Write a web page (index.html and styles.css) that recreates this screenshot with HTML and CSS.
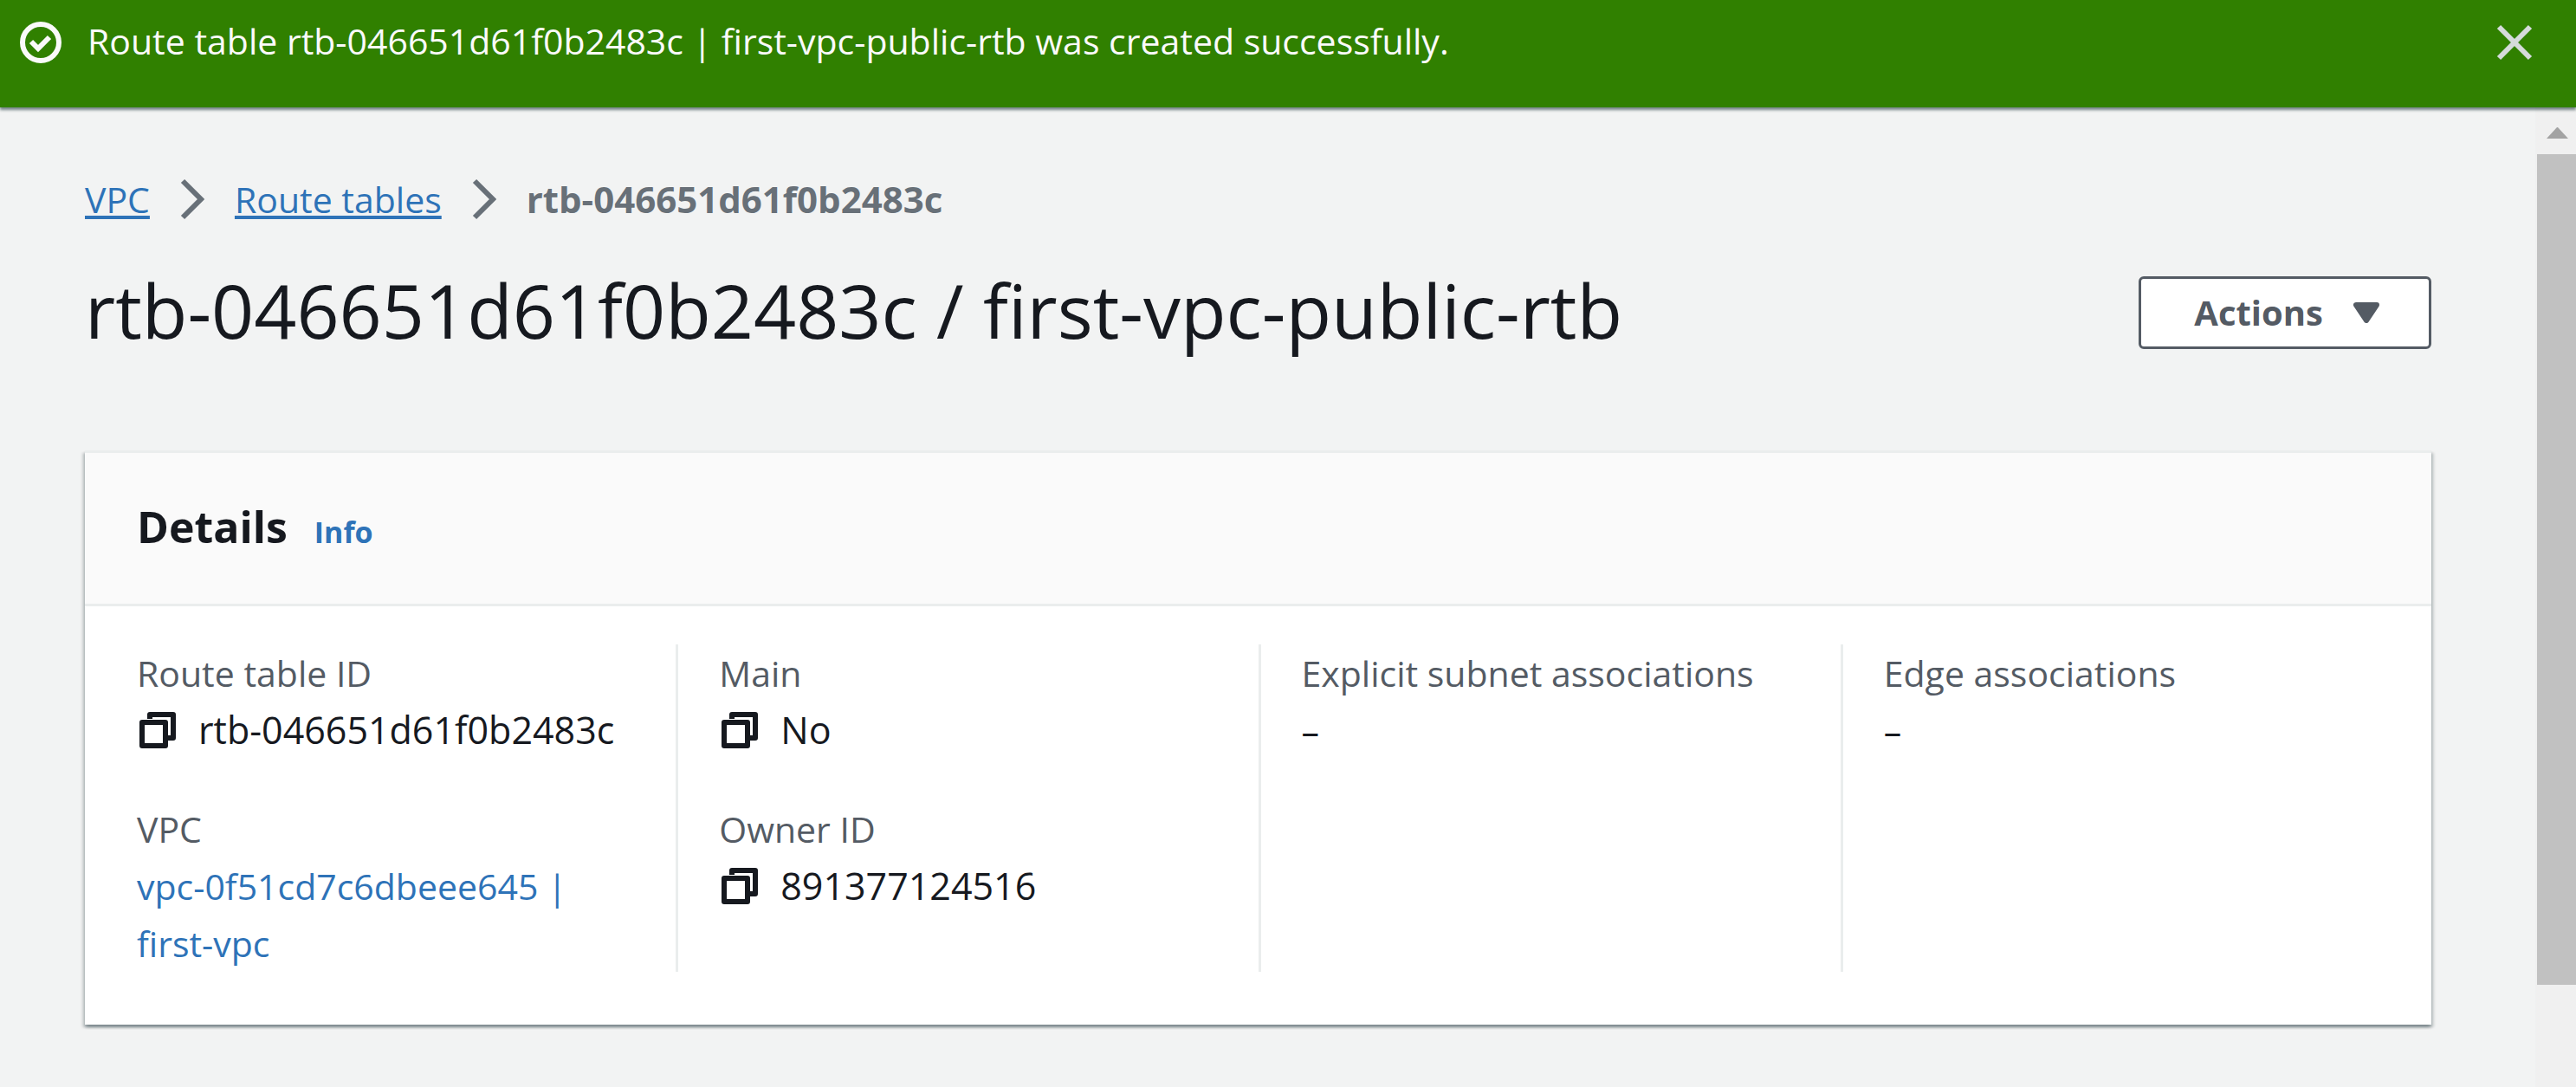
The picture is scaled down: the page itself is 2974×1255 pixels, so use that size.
FILE: index.html
```html
<!DOCTYPE html>
<html lang="en">
<head>
<meta charset="utf-8">
<title>Route table details | VPC</title>
<link rel="stylesheet" href="styles.css">
</head>
<body>
<svg class="sprite" aria-hidden="true">
  <symbol id="copy" viewBox="0 0 48 48">
    <path d="M15 11V6H42V33H36" />
    <rect x="6" y="15" width="27" height="27" />
  </symbol>
  <symbol id="chevron" viewBox="0 0 28 48">
    <path d="M3 3L24 24L3 45" />
  </symbol>
</svg>

<div class="flash" role="status">
  <svg class="flash-icon" viewBox="0 0 54 54" aria-hidden="true">
    <circle cx="27" cy="27" r="21" />
    <path d="M16 26L24 34L37 21" />
  </svg>
  <p class="flash-text">Route table rtb-046651d61f0b2483c | first-vpc-public-rtb was created successfully.</p>
  <button class="icon-button" type="button" aria-label="Dismiss">
    <svg class="close-icon" viewBox="0 0 54 54" aria-hidden="true"><path d="M9 9L45 45M45 9L9 45" /></svg>
  </button>
</div>

<div class="viewport">
  <main class="content">
    <nav class="breadcrumbs" aria-label="Breadcrumbs">
      <a class="crumb-link" href="#vpc">VPC</a>
      <svg class="chevron" aria-hidden="true"><use href="#chevron" /></svg>
      <a class="crumb-link" href="#route-tables">Route tables</a>
      <svg class="chevron" aria-hidden="true"><use href="#chevron" /></svg>
      <span class="crumb-current">rtb-046651d61f0b2483c</span>
    </nav>

    <header class="page-header">
      <h1 class="page-title">rtb-046651d61f0b2483c / first-vpc-public-rtb</h1>
      <button class="actions" type="button">
        Actions
        <svg class="caret" viewBox="0 0 30 24" aria-hidden="true"><path d="M3 3H27L15 21Z" /></svg>
      </button>
    </header>

    <section class="card">
      <div class="card-header">
        <h2 class="card-title">Details</h2>
        <a class="info-link" href="#info">Info</a>
      </div>
      <div class="columns">
        <dl class="column">
          <div class="field">
            <dt class="label">Route table ID</dt>
            <dd class="value copyable">
              <button class="icon-button" type="button" aria-label="Copy route table ID"><svg class="copy-icon"><use href="#copy" /></svg></button>
              rtb-046651d61f0b2483c
            </dd>
          </div>
          <div class="field">
            <dt class="label">VPC</dt>
            <dd class="value"><a class="value-link" href="#vpc-details">vpc-0f51cd7c6dbeee645 | first-vpc</a></dd>
          </div>
        </dl>
        <dl class="column">
          <div class="field">
            <dt class="label">Main</dt>
            <dd class="value copyable">
              <button class="icon-button" type="button" aria-label="Copy main"><svg class="copy-icon"><use href="#copy" /></svg></button>
              No
            </dd>
          </div>
          <div class="field">
            <dt class="label">Owner ID</dt>
            <dd class="value copyable">
              <button class="icon-button" type="button" aria-label="Copy owner ID"><svg class="copy-icon"><use href="#copy" /></svg></button>
              891377124516
            </dd>
          </div>
        </dl>
        <dl class="column">
          <div class="field">
            <dt class="label">Explicit subnet associations</dt>
            <dd class="value">–</dd>
          </div>
        </dl>
        <dl class="column">
          <div class="field">
            <dt class="label">Edge associations</dt>
            <dd class="value">–</dd>
          </div>
        </dl>
      </div>
    </section>
  </main>

  <div class="scrollbar" aria-hidden="true">
    <svg class="scroll-arrow" viewBox="0 0 45 50"><path d="M11 32L23 19H24L36 32Z" /></svg>
    <div class="scroll-track"><div class="scroll-thumb"></div></div>
  </div>
</div>
</body>
</html>
```
FILE: styles.css
```css
* {
  box-sizing: border-box;
}

body {
  margin: 0;
  min-height: 100vh;
  display: flex;
  flex-direction: column;
  background: #f2f3f3;
  color: #16191f;
  font-family: "Open Sans", "Noto Sans", sans-serif;
  font-size: 41px;
}

h1, h2, p, dl, dd {
  margin: 0;
}

a {
  color: #2e73b8;
  text-decoration: none;
}

svg {
  display: block;
  flex: none;
}

.sprite {
  position: absolute;
  width: 0;
  height: 0;
}

.icon-button {
  padding: 0;
  border: 0;
  background: none;
  color: inherit;
  cursor: pointer;
}

/* Success notification */
.flash {
  position: relative;
  display: flex;
  align-items: flex-start;
  gap: 27px;
  padding: 22px 44px 48px 20px;
  background: #308000;
  color: #fafafa;
  box-shadow: 0 3px 3px rgba(0, 28, 36, 0.5);
}

.flash-icon,
.close-icon {
  width: 54px;
  height: 54px;
  fill: none;
  stroke: #fafafa;
  stroke-width: 6;
}

.close-icon {
  stroke: #d5dbdb;
}

.flash-text {
  flex: 1;
  line-height: 50px;
}

/* Page */
.viewport {
  flex: 1;
  display: flex;
}

.content {
  flex: 1;
  padding: 76px 120px 60px 98px;
}

.breadcrumbs {
  display: flex;
  align-items: center;
  gap: 35px;
  line-height: 60px;
}

.chevron {
  width: 28px;
  height: 48px;
  fill: none;
  stroke: #687078;
  stroke-width: 6;
}

.crumb-link {
  text-decoration: underline;
  text-decoration-thickness: 4px;
  text-underline-offset: 3px;
  text-decoration-skip-ink: none;
}

.crumb-current {
  color: #687078;
  font-size: 42px;
  font-weight: 700;
}

.page-header {
  display: flex;
  align-items: flex-start;
  justify-content: space-between;
  margin: 40px 0 104px;
}

.page-title {
  font-size: 86px;
  font-weight: 400;
  line-height: 116px;
}

.actions {
  display: flex;
  align-items: center;
  gap: 35px;
  height: 84px;
  margin-top: 19px;
  padding: 0 57px 0 61px;
  border: 3px solid #545b64;
  border-radius: 6px;
  background: #fff;
  color: #545b64;
  font: 700 40px/60px "Open Sans", "Noto Sans", sans-serif;
  cursor: pointer;
}

.caret {
  width: 30px;
  height: 24px;
  fill: #545b64;
  stroke: #545b64;
  stroke-width: 6;
  stroke-linejoin: round;
}

/* Details card */
.card {
  border-top: 3px solid #eaeded;
  background: #fff;
  box-shadow:
    0 3px 3px rgba(0, 28, 36, 0.3),
    3px 3px 3px rgba(0, 28, 36, 0.15),
    -3px 3px 3px rgba(0, 28, 36, 0.15);
}

.card-header {
  display: flex;
  align-items: baseline;
  gap: 31px;
  padding: 55px 60px 59px;
  border-bottom: 3px solid #eaeded;
  background: #fafafa;
  line-height: 60px;
}

.card-title {
  font-size: 50px;
  font-weight: 700;
}

.info-link {
  font-size: 34px;
  font-weight: 700;
  line-height: 40px;
}

.columns {
  display: grid;
  grid-template-columns: repeat(4, 1fr);
  padding: 44px 7px 61px 13px;
  line-height: 66px;
}

.column {
  display: flex;
  flex-direction: column;
  gap: 48px;
  padding: 0 40px 0 47px;
  border-right: 3px solid #eaeded;
}

.column:last-child {
  border-right: 0;
}

.label {
  color: #545b64;
}

.copyable {
  display: flex;
  align-items: center;
  gap: 23px;
  font-size: 43px;
}

.copy-icon {
  width: 48px;
  height: 48px;
  fill: none;
  stroke: #16191f;
  stroke-width: 6;
  stroke-linejoin: round;
}

/* Scrollbar */
.scrollbar {
  display: flex;
  flex-direction: column;
  padding: 4px 0 0 2px;
  background: #f0f0f0;
}

.scroll-arrow {
  width: 45px;
  height: 50px;
  fill: #a3a3a3;
}

.scroll-track {
  flex: 1;
}

.scroll-thumb {
  height: 89%;
  background: #c1c1c1;
}
```
